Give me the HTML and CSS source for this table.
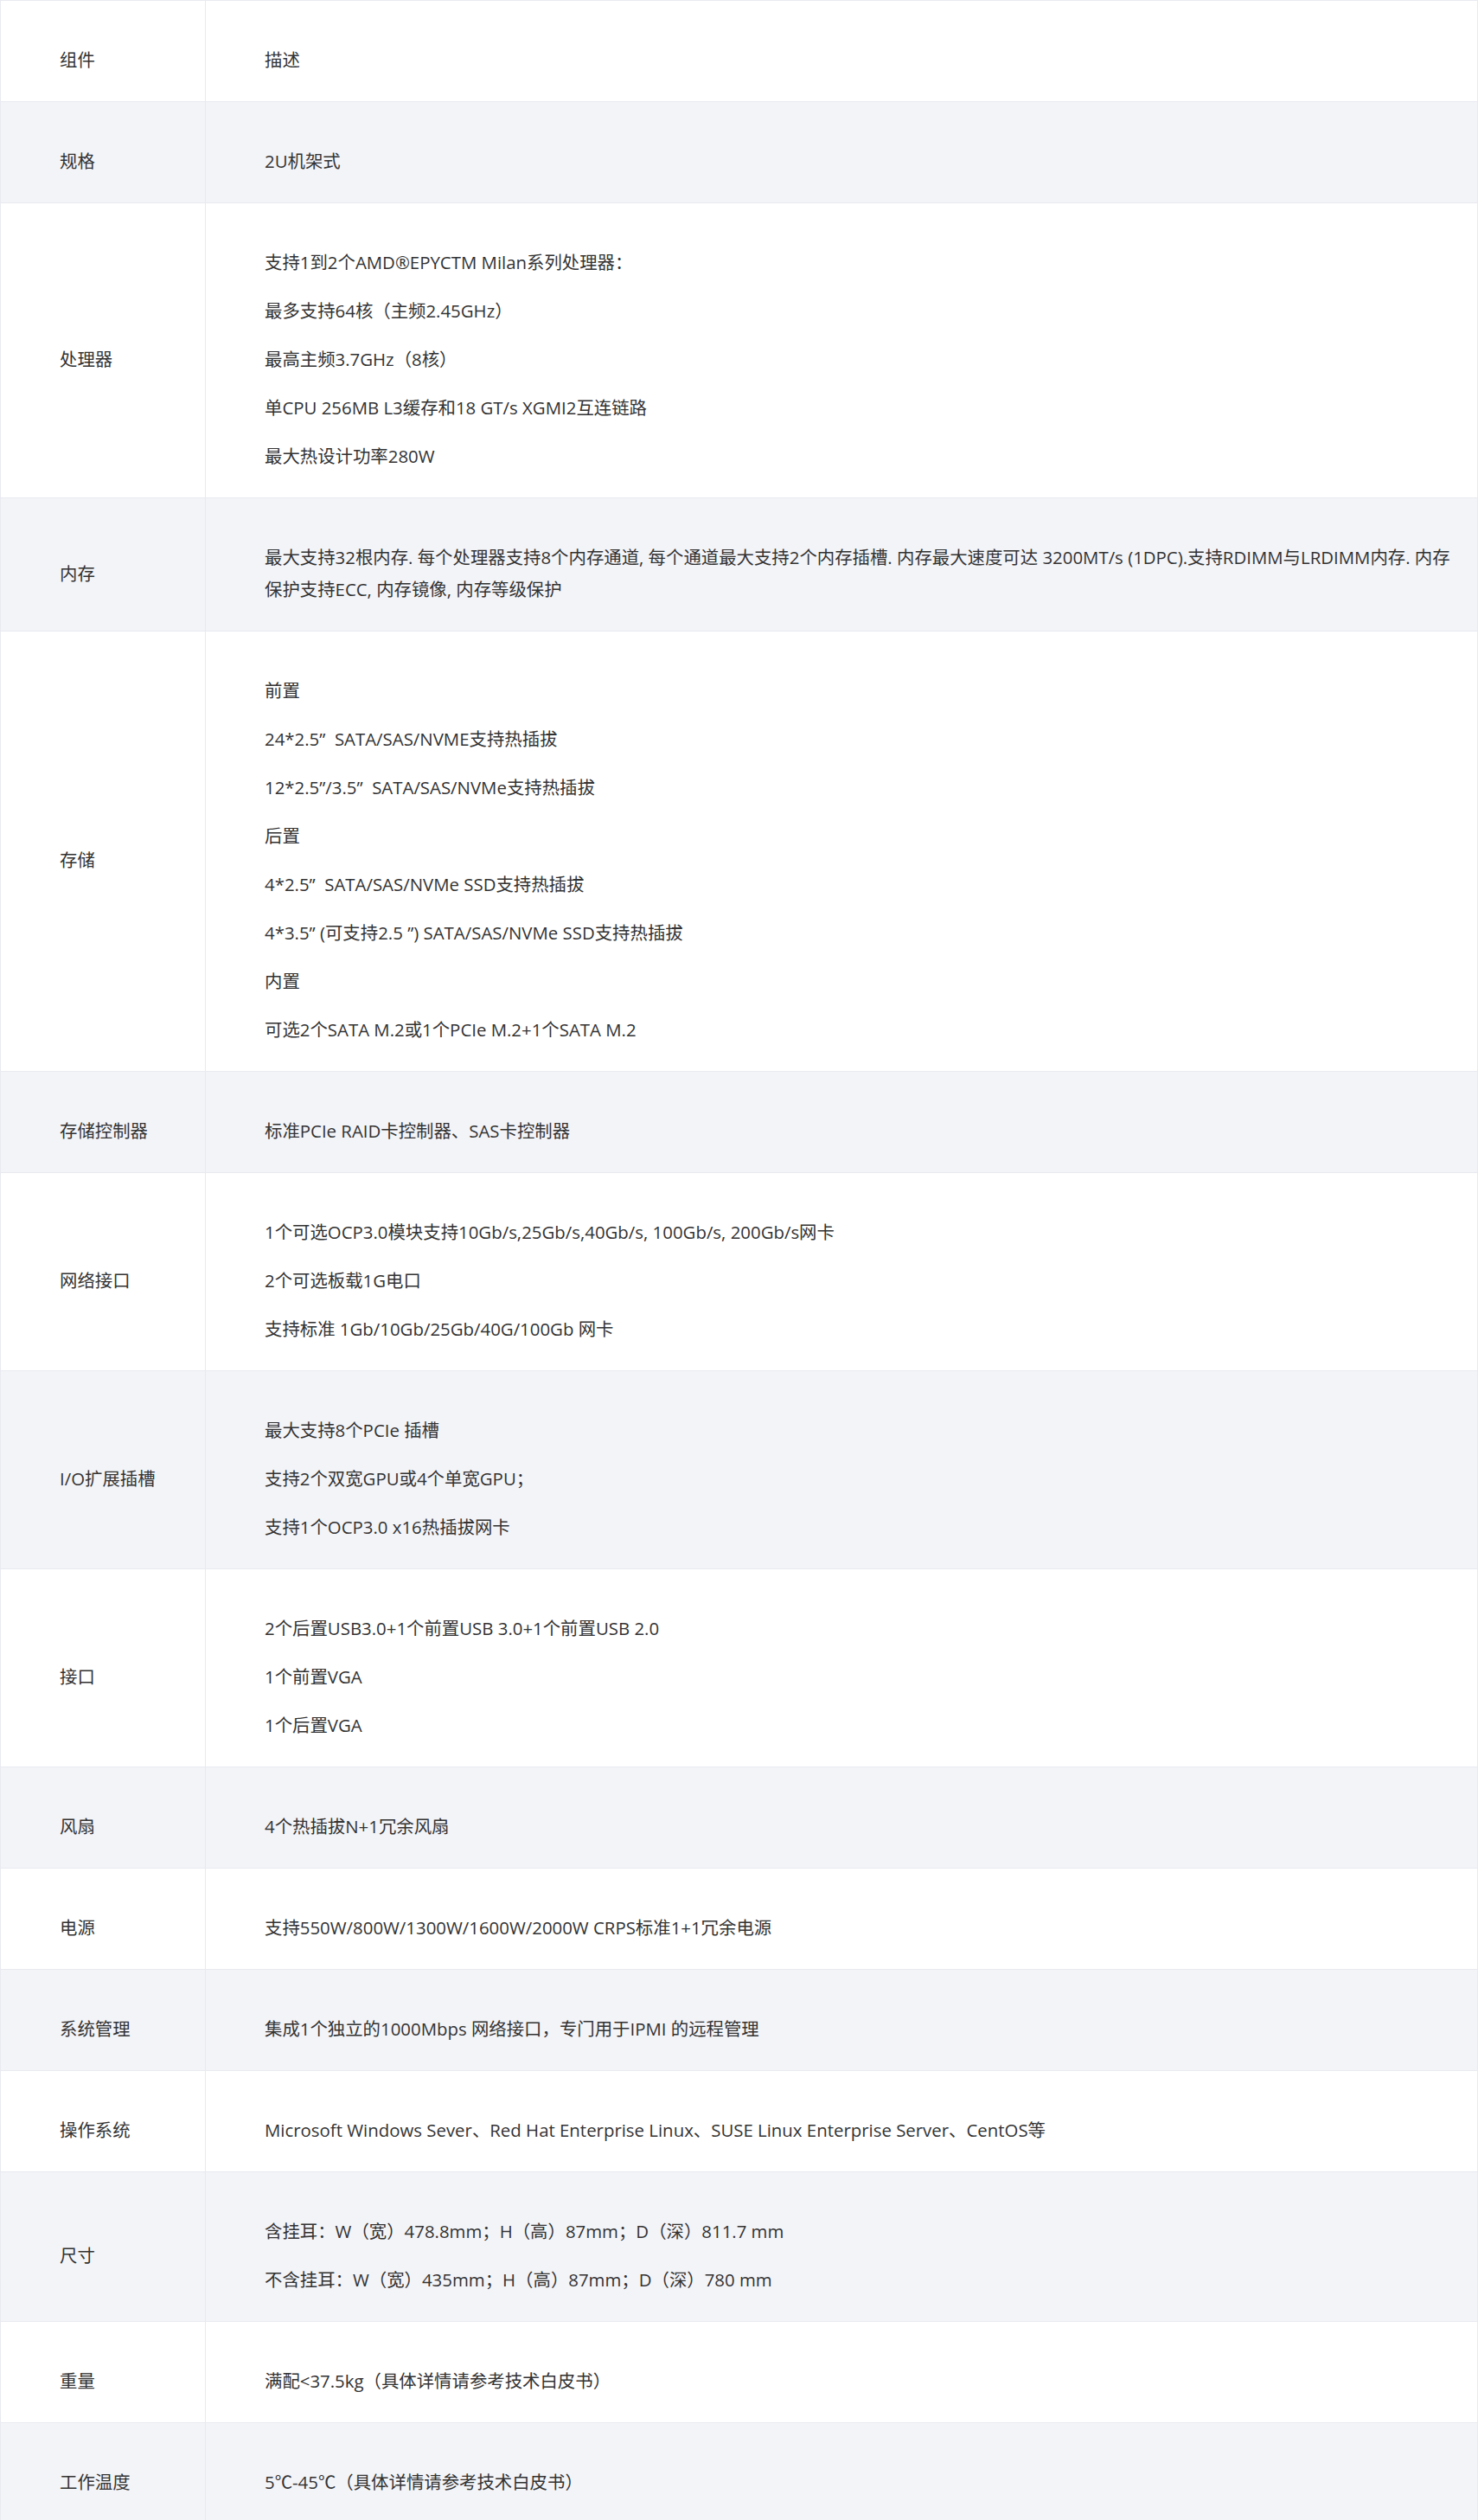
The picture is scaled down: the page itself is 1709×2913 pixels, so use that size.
FILE: index.html
```html
<!DOCTYPE html>
<html lang="zh-CN">
<head>
    <meta charset="UTF-8">
    <meta name="viewport" content="width=device-width, initial-scale=1.0">
    <title>产品规格</title>
    <link rel="stylesheet" href="styles.css">
</head>
<body>

<!-- 规格参数表 -->
<table class="spec-table">
    <colgroup>
        <col class="col-name">
        <col>
    </colgroup>
    <tbody>
        <tr>
            <td>组件</td>
            <td><p>描述</p></td>
        </tr>
        <tr>
            <td>规格</td>
            <td><p>2U机架式</p></td>
        </tr>
        <tr>
            <td>处理器</td>
            <td>
                <p>支持1到2个AMD®EPYCTM Milan系列处理器：</p>
                <p>最多支持64核（主频2.45GHz）</p>
                <p>最高主频3.7GHz（8核）</p>
                <p>单CPU 256MB L3缓存和18 GT/s XGMI2互连链路</p>
                <p>最大热设计功率280W</p>
            </td>
        </tr>
        <tr>
            <td>内存</td>
            <td><p>最大支持32根内存. 每个处理器支持8个内存通道, 每个通道最大支持2个内存插槽. 内存最大速度可达 3200MT/s (1DPC).支持RDIMM与LRDIMM内存. 内存保护支持ECC, 内存镜像, 内存等级保护</p></td>
        </tr>
        <tr>
            <td>存储</td>
            <td>
                <p>前置</p>
                <p>24*2.5” &nbsp;SATA/SAS/NVME支持热插拔</p>
                <p>12*2.5”/3.5” &nbsp;SATA/SAS/NVMe支持热插拔</p>
                <p>后置</p>
                <p>4*2.5” &nbsp;SATA/SAS/NVMe SSD支持热插拔</p>
                <p>4*3.5” (可支持2.5 ”) SATA/SAS/NVMe SSD支持热插拔</p>
                <p>内置</p>
                <p>可选2个SATA M.2或1个PCIe M.2+1个SATA M.2</p>
            </td>
        </tr>
        <tr>
            <td>存储控制器</td>
            <td><p>标准PCIe RAID卡控制器、SAS卡控制器</p></td>
        </tr>
        <tr>
            <td>网络接口</td>
            <td>
                <p>1个可选OCP3.0模块支持10Gb/s,25Gb/s,40Gb/s, 100Gb/s, 200Gb/s网卡</p>
                <p>2个可选板载1G电口</p>
                <p>支持标准 1Gb/10Gb/25Gb/40G/100Gb 网卡</p>
            </td>
        </tr>
        <tr>
            <td>I/O扩展插槽</td>
            <td>
                <p>最大支持8个PCIe 插槽</p>
                <p>支持2个双宽GPU或4个单宽GPU；</p>
                <p>支持1个OCP3.0 x16热插拔网卡</p>
            </td>
        </tr>
        <tr>
            <td>接口</td>
            <td>
                <p>2个后置USB3.0+1个前置USB 3.0+1个前置USB 2.0</p>
                <p>1个前置VGA</p>
                <p>1个后置VGA</p>
            </td>
        </tr>
        <tr>
            <td>风扇</td>
            <td><p>4个热插拔N+1冗余风扇</p></td>
        </tr>
        <tr>
            <td>电源</td>
            <td><p>支持550W/800W/1300W/1600W/2000W CRPS标准1+1冗余电源</p></td>
        </tr>
        <tr>
            <td>系统管理</td>
            <td><p>集成1个独立的1000Mbps 网络接口，专门用于IPMI 的远程管理</p></td>
        </tr>
        <tr>
            <td>操作系统</td>
            <td><p>Microsoft Windows Sever、Red Hat Enterprise Linux、SUSE Linux Enterprise Server、CentOS等</p></td>
        </tr>
        <tr>
            <td>尺寸</td>
            <td>
                <p>含挂耳：W（宽）478.8mm；H（高）87mm；D（深）811.7 mm</p>
                <p>不含挂耳：W（宽）435mm；H（高）87mm；D（深）780 mm</p>
            </td>
        </tr>
        <tr>
            <td>重量</td>
            <td><p>满配&lt;37.5kg（具体详情请参考技术白皮书）</p></td>
        </tr>
        <tr>
            <td>工作温度</td>
            <td><p>5℃-45℃（具体详情请参考技术白皮书）</p></td>
        </tr>
    </tbody>
</table>

</body>
</html>
```

FILE: styles.css
```css
body {
    font-family: "Open Sans", "Noto Sans CJK SC", sans-serif;
    font-size: 20.4px;
    color: #333;
    background-color: #fff;
    margin: 0;
    padding: 0;
}
.spec-table {
    width: 100%;
    border-collapse: collapse;
    table-layout: fixed;
}
.col-name {
    width: 237px;
}
.spec-table td {
    border: 1px solid #e8eaf0;
    padding: 50px 30px 29px 68px;
    line-height: 37px;
    vertical-align: middle;
}
.spec-table tr:nth-child(even) td {
    background-color: #f3f4f8;
}
.spec-table p {
    margin: 0;
}
.spec-table p + p {
    margin-top: 19px;
}
```
